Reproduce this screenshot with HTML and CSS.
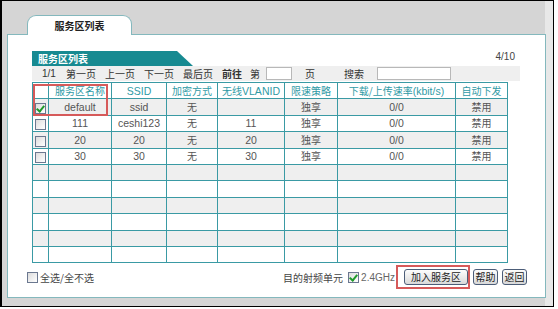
FILE: index.html
```html
<!DOCTYPE html>
<html lang="zh-CN">
<head>
    <meta charset="UTF-8">
    <title>服务区列表</title>
    <link rel="stylesheet" href="styles.css">
</head>
<body>
    <div class="frame">
        <div class="tabs">
            <div class="tab">服务区列表</div>
        </div>
        <div class="panel">
            <div class="title-row">
                <div class="title">服务区列表</div>
                <span class="count">4/10</span>
            </div>
            <div class="pager">
                <span class="pages">1/1</span>
                <a href="#">第一页</a>
                <a href="#">上一页</a>
                <a href="#">下一页</a>
                <a href="#">最后页</a>
                <b class="goto">前往</b>
                <span>第</span>
                <input type="text" class="page-input">
                <span class="page-unit">页</span>
                <span class="search-label">搜索</span>
                <input type="text" class="search-input">
            </div>
            <div class="grid-wrap">
                <table class="grid">
                    <colgroup>
                        <col style="width:16px">
                        <col style="width:63px">
                        <col style="width:55px">
                        <col style="width:51px">
                        <col style="width:67px">
                        <col style="width:53px">
                        <col style="width:118px">
                        <col style="width:52px">
                    </colgroup>
                    <thead>
                        <tr>
                            <th></th>
                            <th>服务区名称</th>
                            <th class="latin">SSID</th>
                            <th>加密方式</th>
                            <th>无线<span class="latin">VLANID</span></th>
                            <th>限速策略</th>
                            <th>下载/上传速率<span class="latin">(kbit/s)</span></th>
                            <th>自动下发</th>
                        </tr>
                    </thead>
                    <tbody id="rows"></tbody>
                </table>
                <span class="mark mark-name"></span>
            </div>
            <div class="footer">
                <label class="select-all"><span class="box"></span>全选/全不选</label>
                <div class="actions">
                    <span class="radio-label">目的射频单元</span>
                    <span class="box checked"></span>
                    <span class="band">2.4GHz</span>
                    <span class="btn-mark">
                        <button class="btn btn-wide">加入服务区</button>
                        <span class="mark mark-btn"></span>
                    </span>
                    <button class="btn">帮助</button>
                    <button class="btn">返回</button>
                </div>
            </div>
        </div>
    </div>

    <script>
        const services = [
            { name: 'default', ssid: 'ssid', enc: '无', vlan: '', policy: '独享', rate: '0/0', auto: '禁用', checked: true },
            { name: '111', ssid: 'ceshi123', enc: '无', vlan: '11', policy: '独享', rate: '0/0', auto: '禁用' },
            { name: '20', ssid: '20', enc: '无', vlan: '20', policy: '独享', rate: '0/0', auto: '禁用' },
            { name: '30', ssid: '30', enc: '无', vlan: '30', policy: '独享', rate: '0/0', auto: '禁用' }
        ];

        const tbody = document.getElementById('rows');
        for (let i = 0; i < 10; i++) {
            const s = services[i];
            const tr = document.createElement('tr');
            if (s) {
                tr.innerHTML = `<td><span class="box${s.checked ? ' checked' : ''}"></span></td>` +
                    `<td class="latin">${s.name}</td><td class="latin">${s.ssid}</td><td>${s.enc}</td>` +
                    `<td class="latin">${s.vlan}</td><td>${s.policy}</td><td class="latin">${s.rate}</td><td>${s.auto}</td>`;
            } else {
                tr.innerHTML = '<td></td><td></td><td></td><td></td><td></td><td></td><td></td><td></td>';
            }
            tbody.appendChild(tr);
        }
    </script>
</body>
</html>
```

FILE: styles.css
```css
body {
    margin: 0;
    padding: 0;
    background: #fff;
    font-family: "Noto Sans CJK SC", "Liberation Sans", sans-serif;
    font-size: 10px;
    color: #333;
}

.frame {
    width: 551px;
    height: 305px;
    border: 1px solid #000;
    border-left-width: 2px;
    background: linear-gradient(to right, #d5d5d5 543px, #e8e8e8 543px);
    display: flex;
    flex-direction: column;
}

.tabs {
    display: flex;
    padding: 14px 0 0 25px;
}

.tab {
    position: relative;
    z-index: 1;
    width: 103px;
    height: 19px;
    margin-bottom: -1px;
    background: #fff;
    border: 1px solid #84b8bd;
    border-bottom: none;
    border-radius: 9px 9px 0 0;
    text-align: center;
    font-weight: bold;
    line-height: 19px;
    color: #222;
}

.panel {
    width: 537px;
    height: 262px;
    margin-left: 5px;
    background: #fff;
    border: 1px solid #84b8bd;
}

.title-row {
    display: flex;
    align-items: flex-end;
    justify-content: space-between;
    width: 488px;
    margin: 16px 0 0 24px;
}

.title {
    width: 155px;
    height: 15px;
    padding-left: 6px;
    background: #178a91;
    clip-path: polygon(0 0, 145px 0, 161px 100%, 0 100%);
    color: #fff;
    font-weight: bold;
    line-height: 15px;
}

.count {
    font-family: "Liberation Sans", sans-serif;
    color: #444;
    padding: 0 5px 4px 0;
}

.pager {
    display: flex;
    align-items: center;
    width: 478px;
    height: 15px;
    margin-left: 24px;
    padding-left: 10px;
    background: #efefef;
    color: #333;
}

.pager a {
    color: #333;
    text-decoration: none;
    margin-right: 9px;
}

.pages {
    font-family: "Liberation Sans", sans-serif;
    width: 24px;
}

.goto {
    margin-right: 8px;
}

.pager input {
    height: 11px;
    border: 1px solid #b8b8b8;
    background: #fff;
    padding: 0;
    margin: 0;
}

.page-input {
    width: 24px;
    margin-left: 6px !important;
}

.page-unit {
    margin-left: 13px;
}

.search-label {
    margin-left: 29px;
}

.search-input {
    width: 72px;
    margin-left: 13px !important;
}

.grid-wrap {
    position: relative;
    width: 476px;
    margin: 1px 0 0 24px;
}

.grid {
    border-collapse: collapse;
    table-layout: fixed;
    width: 476px;
}

.grid th,
.grid td {
    border: 1px solid #3a9aa4;
    height: 15.4px;
    padding: 0;
    text-align: center;
    font-weight: normal;
    line-height: 14px;
    white-space: nowrap;
    overflow: hidden;
}

.grid th {
    color: #2f9aa5;
    background: #fff;
}

.grid td {
    color: #555;
}

.grid tbody tr:nth-child(odd) td {
    background: #efefef;
}

.latin {
    font-family: "Liberation Sans", sans-serif;
    font-size: 10.5px;
}

.box {
    display: inline-block;
    width: 9px;
    height: 9px;
    border: 1px solid #6b7890;
    background: linear-gradient(135deg, #dcdcdc, #fff);
    vertical-align: middle;
    position: relative;
}

.box.checked::after {
    content: "";
    position: absolute;
    left: 2px;
    top: 0;
    width: 3px;
    height: 6px;
    border: solid #1f9a2a;
    border-width: 0 2px 2px 0;
    transform: rotate(40deg);
}

.mark {
    position: absolute;
    border: 2px solid #d65a5a;
    pointer-events: none;
}

.mark-name {
    left: 1px;
    top: 2px;
    width: 71px;
    height: 28px;
}

.footer {
    display: flex;
    justify-content: space-between;
    align-items: center;
    width: 500px;
    margin: 4px 0 0 19px;
    height: 20px;
}

.select-all {
    display: flex;
    align-items: center;
    gap: 2px;
    color: #444;
}

.actions {
    display: flex;
    align-items: center;
    color: #444;
}

.radio-label {
    margin-right: 5px;
}

.band {
    font-family: "Liberation Sans", sans-serif;
    color: #666;
    margin-left: 2px;
    margin-right: 9px;
}

.btn-mark {
    position: relative;
    display: inline-flex;
    margin-right: 1px;
}

.mark-btn {
    left: -8px;
    right: -2px;
    top: -4px;
    bottom: -4px;
}

.btn {
    width: 25px;
    height: 16px;
    padding: 0;
    margin: 0 0 0 4px;
    border: 1px solid #4c5d78;
    border-radius: 3px;
    background: linear-gradient(#fdfdfd, #d9d9d9);
    font-family: "Noto Sans CJK SC", sans-serif;
    font-size: 10px;
    line-height: 14px;
    color: #222;
    cursor: pointer;
    white-space: nowrap;
}

.btn-wide {
    width: 64px;
    margin-left: 0;
}
```
